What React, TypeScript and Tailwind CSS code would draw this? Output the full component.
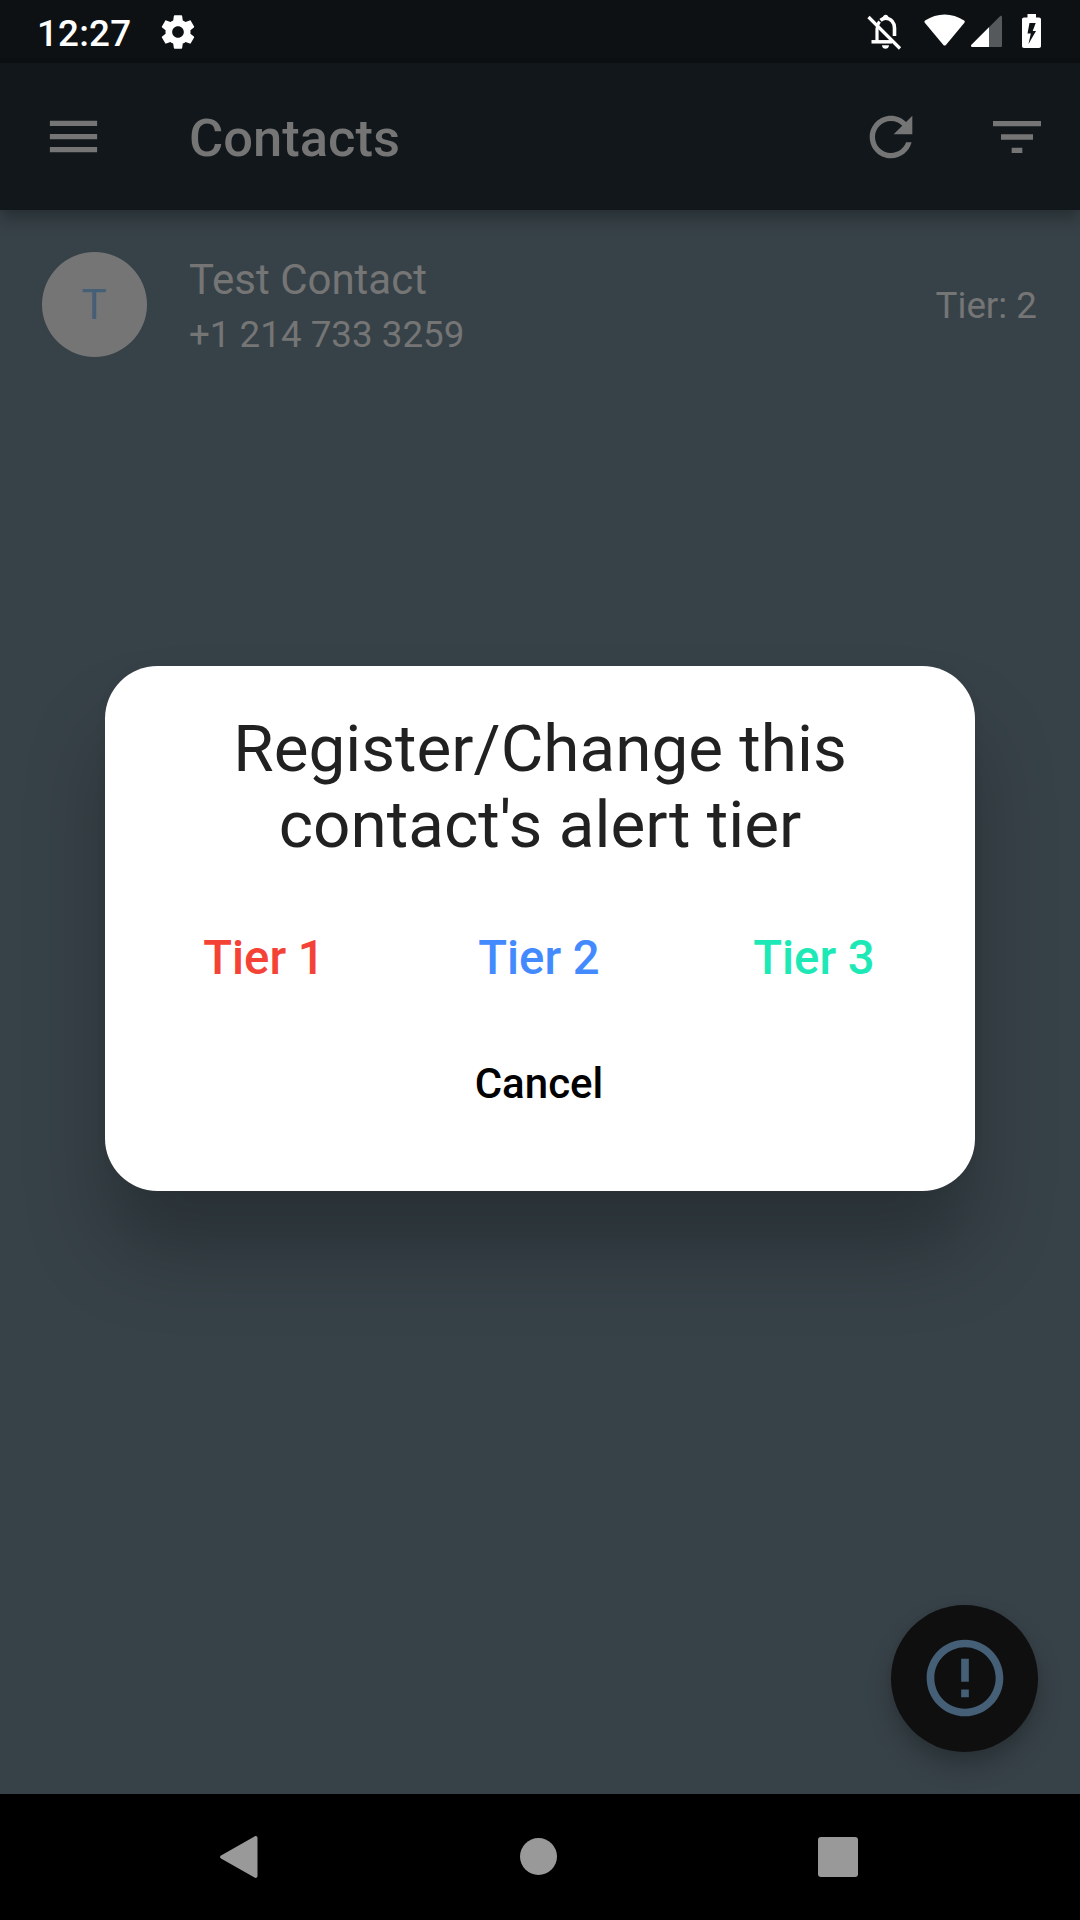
import React from "react";

const GEAR =
  "M19.43 12.98c.04-.32.07-.64.07-.98s-.03-.66-.07-.98l2.11-1.65c.19-.15.24-.42.12-.64l-2-3.46c-.12-.22-.39-.3-.61-.22l-2.49 1c-.52-.4-1.08-.73-1.69-.98l-.38-2.65C14.46 2.18 14.25 2 14 2h-4c-.25 0-.46.18-.49.42l-.38 2.65c-.61.25-1.17.59-1.69.98l-2.49-1c-.23-.09-.49 0-.61.22l-2 3.46c-.13.22-.07.49.12.64l2.11 1.65c-.04.32-.07.65-.07.98s.03.66.07.98l-2.11 1.65c-.19.15-.24.42-.12.64l2 3.46c.12.22.39.3.61.22l2.49-1c.52.4 1.08.73 1.69.98l.38 2.65c.03.24.24.42.49.42h4c.25 0 .46-.18.49-.42l.38-2.65c.61-.25 1.17-.59 1.69-.98l2.49 1c.23.09.49 0 .61-.22l2-3.46c.12-.22.07-.49-.12-.64l-2.11-1.65zM12 15.5c-1.93 0-3.5-1.57-3.5-3.5s1.57-3.5 3.5-3.5 3.5 1.57 3.5 3.5-1.57 3.5-3.5 3.5z";

function StatusBar() {
  return (
    <header className="flex h-[63px] shrink-0 justify-between bg-[#0d1114] pl-[37px] pr-[36px] text-white">
      <div className="flex">
        <span className="mt-[12px] w-[121px] whitespace-nowrap text-[36.75px] leading-[44px] font-medium tracking-[0.2px]">
          12:27
        </span>
        <svg className="mt-[12px] h-[40px] w-[40px]" viewBox="0 0 24 24" fill="currentColor">
          <path fillRule="evenodd" d={GEAR} />
        </svg>
      </div>
      <svg className="h-[63px] w-[180px]" viewBox="864 0 180 63" fill="currentColor">
        <g fill="none" stroke="currentColor">
          <path d="M877 41V29c0-3 1-5.500 2.500-7.500" strokeWidth="3.200" />
          <path d="M880.500 20.300c2-1.600 3.500-2.100 5-2.100 5.500 0 9 4.500 9 9.800V36" strokeWidth="3.600" />
          <path d="M871.500 41.800H892" strokeWidth="3.500" />
          <path d="M868.500 17L900 48.500" strokeWidth="3.200" />
        </g>
        <path d="M882.700 18.500c0-5 6-5 6 0zM882 45.300h7c0 4.700-7 4.700-7 0z" />
        <path d="M924.800 22.800c-.6-.8-.5-1.600.3-2.200 12-8.200 27-8.200 39 0 .8.600.9 1.400.3 2.200l-18.500 22.100c-.8.900-1.700.9-2.500 0z" />
        <path
          d="M1002 17.500V45.500c0 1-.500 1.500-1.500 1.500H972.500c-1.500 0-2-1.200-1-2.200L1000 16.200c1-.8 2-.3 2 1.300z"
          fill="#55595b"
        />
        <path d="M989 27.300V47H972.500c-1.500 0-2-1.200-1-2.200z" />
        <path
          fillRule="evenodd"
          d="M1027.500 14h8.500v3.500h3c1.200 0 2 .8 2 2V46c0 1.200-.8 2-2 2h-15c-1.200 0-2-.8-2-2V19.500c0-1.200.8-2 2-2h3.500zM1029.500 23l-2 10.500h3.300L1028.500 44l7.500-13h-3.300l3-8z"
        />
      </svg>
    </header>
  );
}

function AppBar() {
  return (
    <div className="relative z-10 flex h-[147px] shrink-0 items-center bg-[#11171a] text-[#757575] shadow-[0_10px_14px_rgba(0,0,0,0.25),0_0_5px_rgba(0,0,0,0.04)]">
      <div className="flex w-[189px] pl-[42px]">
        <svg className="h-[63px] w-[63px]" viewBox="0 0 24 24" fill="currentColor">
          <path d="M3 18h18v-2H3v2zm0-5h18v-2H3v2zm0-7v2h18V6H3z" />
        </svg>
      </div>
      <h1 className="mt-[2px] flex-1 text-[52.5px] leading-[62px] font-medium">Contacts</h1>
      <button className="flex w-[126px] justify-center">
        <svg className="h-[64px] w-[64px]" viewBox="0 0 24 24" fill="currentColor">
          <path d="M17.650 6.350C16.200 4.900 14.210 4 12 4c-4.420 0-7.990 3.580-7.990 8s3.570 8 7.990 8c3.730 0 6.840-2.550 7.730-6h-2.080c-.82 2.330-3.040 4-5.650 4-3.310 0-6-2.690-6-6s2.690-6 6-6c1.660 0 3.140.69 4.220 1.780L13 11h7V4l-2.350 2.350z" />
        </svg>
      </button>
      <button className="flex w-[126px] justify-center">
        <svg className="h-[64px] w-[64px]" viewBox="0 0 24 24" fill="currentColor">
          <path d="M10 18h4v-2h-4v2zM3 6v2h18V6H3zm3 7h12v-2H6v2z" />
        </svg>
      </button>
    </div>
  );
}

function ContactRow() {
  return (
    <div className="flex h-[189px] items-center px-[42px] text-[#757575]">
      <div className="mr-[42px] flex size-[105px] items-center justify-center rounded-full bg-[#757575] pr-px text-[42px] text-[#445f76]">
        T
      </div>
      <div className="flex-1 pt-[3px]">
        <div className="text-[42px] leading-[50px]">Test Contact</div>
        <div className="mt-[8px] text-[36.75px] leading-[44px]">+1 214 733 3259</div>
      </div>
      <div className="pt-[2px] pr-px text-[36.75px]">Tier: 2</div>
    </div>
  );
}

function TierDialog() {
  return (
    <div className="absolute top-[666px] left-[105px] z-20 flex h-[525px] w-[870px] flex-col rounded-[52.5px] bg-white px-[20px] pt-[45px] text-center shadow-[0_62px_80px_rgba(0,0,0,0.26),0_0_12px_rgba(0,0,0,0.04)]">
      <h2 className="text-[65.625px] leading-[76px] text-[#212121]">
        Register/Change this
        <br />
        contact's alert tier
      </h2>
      <div className="mt-[67px] flex justify-center pr-[2px] text-[47.25px] leading-[56px] font-medium">
        <button className="w-[275px] text-[#f44336]">Tier 1</button>
        <button className="w-[275px] text-[#448aff]">Tier 2</button>
        <button className="w-[275px] text-[#1de9b6]">Tier 3</button>
      </div>
      <button className="mt-[73px] self-center pr-[2px] text-[42px] leading-[50px] font-medium text-black">
        Cancel
      </button>
    </div>
  );
}

function AlertButton() {
  return (
    <button className="absolute right-[42px] bottom-[42px] flex size-[147px] items-center justify-center rounded-full bg-[#0f0f0f] pb-px text-[#445f76] shadow-[0_14px_24px_rgba(0,0,0,0.25),0_0_6px_rgba(0,0,0,0.04)]">
      <svg className="h-[92px] w-[92px]" viewBox="0 0 24 24" fill="currentColor">
        <path d="M11 15h2v2h-2zm0-8h2v6h-2zm.99-5C6.470 2 2 6.480 2 12s4.470 10 9.990 10C17.520 22 22 17.520 22 12S17.520 2 11.990 2zM12 20c-4.420 0-8-3.580-8-8s3.580-8 8-8 8 3.580 8 8-3.580 8-8 8z" />
      </svg>
    </button>
  );
}

function NavigationBar() {
  return (
    <nav className="relative z-10 flex h-[126px] shrink-0 items-center justify-between bg-black pr-[222px] pb-px pl-[219px] text-[#999999]">
      <svg className="h-[44px] w-[40px]" viewBox="0 0 40 44" fill="currentColor">
        <path d="M35.500 1.500C37 .6 38.500 1.400 38.500 3v38c0 1.600-1.500 2.400-3 1.500L2 23.500c-1.300-.8-1.300-2.200 0-3z" />
      </svg>
      <div className="size-[37px] rounded-full bg-[#999999]" />
      <div className="size-[40px] rounded-[3px] bg-[#999999]" />
    </nav>
  );
}

export default function App() {
  return (
    <div className="relative flex h-[1920px] w-[1080px] flex-col overflow-hidden bg-[#374248] font-[Roboto,sans-serif]">
      <StatusBar />
      <AppBar />
      <main className="relative flex-1">
        <ContactRow />
        <AlertButton />
      </main>
      <NavigationBar />
      <TierDialog />
    </div>
  );
}
